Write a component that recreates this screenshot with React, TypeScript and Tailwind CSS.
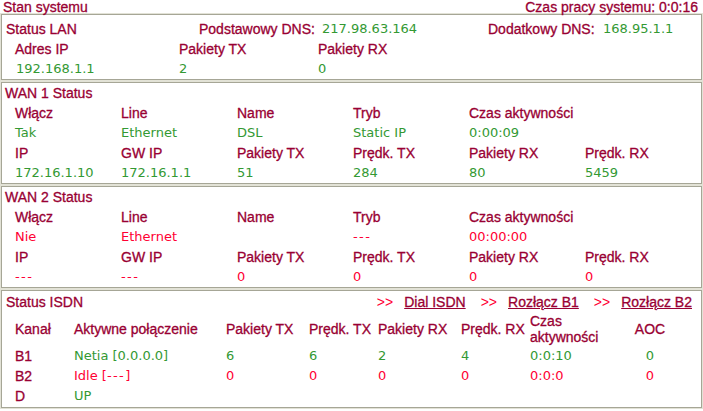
import React from "react";

const LF = "font-['Liberation_Sans',Arial,sans-serif] text-[14px] text-[#990033] whitespace-nowrap [-webkit-text-stroke:0.3px]";
const VF = "font-['DejaVu_Sans',Verdana,sans-serif] text-[13px] whitespace-nowrap";
const GREEN = "text-[#339933]";
const RED = "text-[#ff0033]";

function Box({ children, className = "" }: { children: React.ReactNode; className?: string }) {
  return (
    <div className="border border-[#e2e2d6]">
      <div className={"border border-[#a6a696] " + className}>{children}</div>
    </div>
  );
}

const wanCols = ["w-[106px]", "w-[116px]", "w-[116px]", "w-[116px]", "w-[116px]", "flex-1"];

function V({ t }: { t: string }) {
  if (/^-+$/.test(t)) return <span className="tracking-[1.4px]">{t}</span>;
  return <>{t}</>;
}

function WanRow({ items, value, color }: { items: string[]; value?: boolean; color?: string }) {
  return (
    <div className="flex items-center h-[20px] pl-[13px]">
      {wanCols.map((c, i) => (
        <div key={i} className={c + " " + (value ? VF + " " + color : LF)}>
          {value ? <V t={items[i] ?? ""} /> : items[i] ?? ""}
        </div>
      ))}
    </div>
  );
}

const isdnCols = [
  "w-[59px]",
  "w-[152px]",
  "w-[83px]",
  "w-[69px]",
  "w-[83px]",
  "w-[69px]",
  "w-[70px]",
  "w-[100px] text-center",
];

function IsdnRow({ items, colors }: { items: React.ReactNode[]; colors: string[] }) {
  return (
    <div className="flex items-center h-[20px] pl-[13px]">
      {isdnCols.map((c, i) => (
        <div key={i} className={c + " " + (i === 0 ? LF : VF + " " + colors[i])}>
          {items[i] ?? ""}
        </div>
      ))}
    </div>
  );
}

const ARROW = "font-['Liberation_Sans',Arial,sans-serif] text-[14px] text-[#ff0033] whitespace-nowrap";

export default function App() {
  return (
    <div className="w-[703px] h-[411px] bg-white overflow-hidden">
      <div className="flex justify-between h-[13px] pl-[3px] pr-[5px]">
        <span className={LF + " leading-[15px]"}>Stan systemu</span>
        <span className={LF + " leading-[15px]"}>Czas pracy systemu: 0:0:16</span>
      </div>

      {/* LAN */}
      <Box className="pt-[4px]">
        <div className="flex items-center h-[20px] pl-[4px]">
          <div className={LF + " w-[193px]"}>Status LAN</div>
          <div className={LF + " w-[123px]"}>Podstawowy DNS:</div>
          <div className={VF + " " + GREEN + " w-[166px]"}>217.98.63.164</div>
          <div className={LF + " w-[115px]"}>Dodatkowy DNS:</div>
          <div className={VF + " " + GREEN}>168.95.1.1</div>
        </div>
        <div className="flex items-center h-[20px] pl-[13px]">
          <div className={LF + " w-[164px]"}>Adres IP</div>
          <div className={LF + " w-[139px]"}>Pakiety TX</div>
          <div className={LF}>Pakiety RX</div>
        </div>
        <div className="flex items-center h-[20px] pl-[14px]">
          <div className={VF + " " + GREEN + " w-[163px]"}>192.168.1.1</div>
          <div className={VF + " " + GREEN + " w-[139px]"}>2</div>
          <div className={VF + " " + GREEN}>0</div>
        </div>
      </Box>

      {/* WAN 1 */}
      <Box>
        <div className="flex items-center h-[20px] pl-[3px]">
          <div className={LF}>WAN 1 Status</div>
        </div>
        <WanRow items={["Włącz", "Line", "Name", "Tryb", "Czas aktywności"]} />
        <WanRow value color={GREEN} items={["Tak", "Ethernet", "DSL", "Static IP", "0:00:09"]} />
        <WanRow items={["IP", "GW IP", "Pakiety TX", "Prędk. TX", "Pakiety RX", "Prędk. RX"]} />
        <WanRow value color={GREEN} items={["172.16.1.10", "172.16.1.1", "51", "284", "80", "5459"]} />
      </Box>

      {/* WAN 2 */}
      <Box>
        <div className="flex items-center h-[20px] pl-[3px]">
          <div className={LF}>WAN 2 Status</div>
        </div>
        <WanRow items={["Włącz", "Line", "Name", "Tryb", "Czas aktywności"]} />
        <WanRow value color={RED} items={["Nie", "Ethernet", "", "---", "00:00:00"]} />
        <WanRow items={["IP", "GW IP", "Pakiety TX", "Prędk. TX", "Pakiety RX", "Prędk. RX"]} />
        <WanRow value color={RED} items={["---", "---", "0", "0", "0", "0"]} />
      </Box>

      {/* ISDN */}
      <Box className="pt-[1px] pb-[1px]">
        <div className="flex items-center justify-between h-[20px] pl-[4px] pr-[9px]">
          <div className={LF}>Status ISDN</div>
          <div className="flex items-center">
            <span className={ARROW}>&gt;&gt;</span>
            <a className={LF + " underline ml-[11px]"}>Dial ISDN</a>
            <span className={ARROW + " ml-[15px]"}>&gt;&gt;</span>
            <a className={LF + " underline ml-[11px]"}>Rozłącz B1</a>
            <span className={ARROW + " ml-[15px]"}>&gt;&gt;</span>
            <a className={LF + " underline ml-[11px]"}>Rozłącz B2</a>
          </div>
        </div>
        <div className="flex items-center h-[34px] pl-[13px]">
          {[
            "Kanał",
            "Aktywne połączenie",
            "Pakiety TX",
            "Prędk. TX",
            "Pakiety RX",
            "Prędk. RX",
          ].map((t, i) => (
            <div key={i} className={isdnCols[i] + " " + LF}>
              {t}
            </div>
          ))}
          <div className={isdnCols[6] + " " + LF + " leading-[16px]"}>
            Czas
            <br />
            aktywności
          </div>
          <div className={isdnCols[7] + " " + LF}>AOC</div>
        </div>
        <IsdnRow
          items={["B1", "Netia [0.0.0.0]", "6", "6", "2", "4", "0:0:10", "0"]}
          colors={Array(8).fill(GREEN)}
        />
        <IsdnRow
          items={[
            "B2",
            <>
              Idle [<span className="tracking-[1.4px]">---</span>]
            </>,
            "0",
            "0",
            "0",
            "0",
            "0:0:0",
            "0",
          ]}
          colors={Array(8).fill(RED)}
        />
        <IsdnRow items={["D", "UP"]} colors={Array(8).fill(GREEN)} />
      </Box>
    </div>
  );
}
